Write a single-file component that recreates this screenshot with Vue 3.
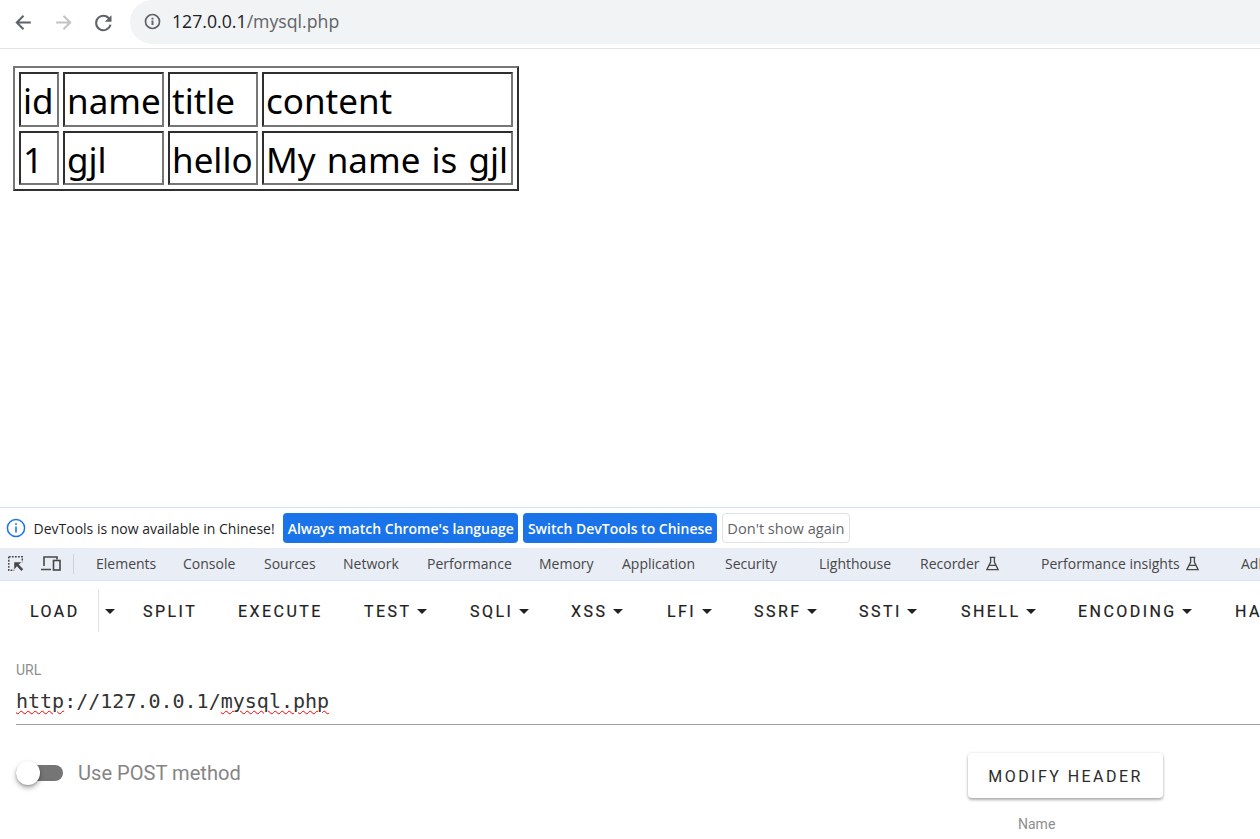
<script setup>
const tabs = [
  { label: 'Elements', w: 87 }, { label: 'Console', w: 81 }, { label: 'Sources', w: 79 }, { label: 'Network', w: 84 },
  { label: 'Performance', w: 112 }, { label: 'Memory', w: 83 }, { label: 'Application', w: 103 }, { label: 'Security', w: 94 },
  { label: 'Lighthouse', w: 101 }, { label: 'Recorder', w: 121, flask: true }, { label: 'Performance insights', w: 200, flask: true }, { label: 'Adblock', w: 80 }
]
const tools = [
  { label: 'SPLIT', w: 95 }, { label: 'EXECUTE', w: 126 }, { label: 'TEST', caret: true, w: 106 }, { label: 'SQLI', caret: true, w: 101 },
  { label: 'XSS', caret: true, w: 96 }, { label: 'LFI', caret: true, w: 87 }, { label: 'SSRF', caret: true, w: 105 },
  { label: 'SSTI', caret: true, w: 102 }, { label: 'SHELL', caret: true, w: 117 }, { label: 'ENCODING', caret: true, w: 157 }, { label: 'HASHING', caret: true, w: 120 }
]
</script>

<template>
  <div class="screen">
    <header class="browser">
      <div class="nav">
        <svg class="nav-icon" viewBox="0 0 20 20"><path d="M17 10H4M10 3.6 3.6 10l6.4 6.4" fill="none" stroke="#5f6368" stroke-width="1.9"/></svg>
        <svg class="nav-icon" viewBox="0 0 20 20"><path d="M3 10h13M10 3.6l6.4 6.4-6.4 6.4" fill="none" stroke="#c1c3c6" stroke-width="1.9"/></svg>
        <svg class="nav-icon" viewBox="0 0 20 20"><path d="M16.4 8.2A6.9 6.9 0 1 0 16.6 12" fill="none" stroke="#5f6368" stroke-width="1.9"/><path d="M17.6 3v6.4h-6.4z" fill="#5f6368"/></svg>
      </div>
      <div class="omnibox">
        <svg class="info" viewBox="0 0 16 16"><circle cx="8" cy="8" r="6.6" fill="none" stroke="#5f6368" stroke-width="1.6"/><path d="M7.1 7.1h1.8v4.2H7.1zM7.1 4.5h1.8v1.7H7.1z" fill="#5f6368"/></svg>
        <span class="host">127.0.0.1</span><span class="path">/mysql.php</span>
      </div>
    </header>

    <main class="page">
      <table class="data">
        <colgroup><col class="c1"><col class="c2"><col class="c3"><col class="c4"></colgroup>
        <tbody>
          <tr class="r1"><td>id</td><td>name</td><td>title</td><td>content</td></tr>
          <tr class="r2"><td>1</td><td>gjl</td><td>hello</td><td>My name is gjl</td></tr>
        </tbody>
      </table>
    </main>

    <section class="devtools">
      <div class="notice">
        <svg class="notice-icon" viewBox="0 0 20 20"><circle cx="10" cy="10" r="8.6" fill="none" stroke="#1a73e8" stroke-width="1.5"/><path d="M9.2 8.6h1.6v6H9.2zM9.2 5.2h1.6v1.7H9.2z" fill="#1a73e8"/></svg>
        <span class="notice-text">DevTools is now available in Chinese!</span>
        <span class="btn primary">Always match Chrome's language</span>
        <span class="btn primary">Switch DevTools to Chinese</span>
        <span class="btn plain">Don't show again</span>
      </div>

      <div class="tabbar">
        <svg class="tool-icon first" viewBox="0 0 20 20"><path d="M2 2h15v6M2 2v15h6" fill="none" stroke="#474747" stroke-width="1.6" stroke-dasharray="2 1.4"/><path d="M8 8h8l-3 2.6 5 5.2-2 2-5-5.2L8 16z" fill="#474747"/></svg>
        <svg class="tool-icon second" viewBox="0 0 22 20"><path d="M4 12V3h13v2.5M1 15.500h10" fill="none" stroke="#474747" stroke-width="1.6"/><rect x="13.500" y="6.500" width="6.500" height="9.500" fill="none" stroke="#474747" stroke-width="1.6"/></svg>
        <span class="tab-sep"></span>
        <span v-for="t in tabs" :key="t.label" class="tab" :style="{ width: t.w + 'px' }">
          {{ t.label }}
          <svg v-if="t.flask" class="flask" viewBox="0 0 16 16"><path d="M5 1.500h6M6 1.500v5L2 14.500h12L10 6.500v-5M4.600 10h6.800" fill="none" stroke="#474747" stroke-width="1.4"/></svg>
        </span>
      </div>

      <nav class="hackbar">
        <span class="load">LOAD</span>
        <span class="load-split"><i class="caret"></i></span>
        <span v-for="t in tools" :key="t.label" class="tool" :style="{ width: t.w + 'px' }">
          {{ t.label }}<i v-if="t.caret" class="caret after"></i>
        </span>
      </nav>

      <div class="url-field">
        <div class="url-label">URL</div>
        <div class="url-value"><span class="wavy">http</span>://127.0.0.1/<span class="wavy">mysql.php</span></div>
      </div>

      <div class="options">
        <div class="post">
          <span class="switch"><span class="knob"></span></span>
          <span class="post-label">Use POST method</span>
        </div>
        <div class="header-col">
          <span class="modify">MODIFY HEADER</span>
          <span class="name-label">Name</span>
        </div>
      </div>
    </section>
  </div>
</template>

<style scoped>
.screen {
  width: 1260px;
  height: 839px;
  overflow: hidden;
  display: flex;
  flex-direction: column;
  background: #fff;
  font-family: "Open Sans", "Noto Sans", sans-serif;
}
.browser {
  height: 48px;
  flex: none;
  display: flex;
  align-items: center;
  border-bottom: 1px solid #e2e3e5;
  box-sizing: content-box;
}
.nav {
  display: flex;
  gap: 19px;
  padding-left: 13px;
  width: 117px;
  box-sizing: border-box;
}
.nav-icon {
  width: 21px;
  height: 21px;
  margin-top: -4px;
}
.omnibox {
  flex: 1;
  height: 44px;
  margin-top: -4px;
  margin-left: 13px;
  background: #f1f3f4;
  border-radius: 22px 0 0 22px;
  display: flex;
  align-items: center;
  padding: 0 0 2px 14px;
  box-sizing: border-box;
  font-size: 17.7px;
}
.info {
  width: 17px;
  height: 17px;
  margin-right: 11px;
}
.host { color: #202124; }
.path { color: #5f6368; }

.page {
  height: 458px;
  flex: none;
  padding: 17px 0 0 13px;
  box-sizing: border-box;
}
.data {
  border: 2px solid;
  border-color: #767676 #2f2f2f #2f2f2f #767676;
  border-spacing: 4px;
  border-collapse: separate;
  table-layout: fixed;
  width: 506px;
  font-family: "Noto Sans", "Open Sans", sans-serif;
  font-size: 35px;
  word-spacing: 2px;
  color: #000;
}
.c1 { width: 40px; }
.c2 { width: 101px; }
.c3 { width: 90px; }
.c4 { width: 251px; }
.data td {
  border: 2px solid;
  border-color: #2f2f2f #767676 #767676 #2f2f2f;
  padding: 2px 2px 0;
  box-sizing: border-box;
  white-space: nowrap;
  overflow: hidden;
  line-height: 47px;
}
.r1 td { height: 55px; }
.r2 td { height: 54px; }

.devtools {
  flex: 1;
  border-top: 1px solid #d2e0fb;
}
.notice {
  height: 40px;
  display: flex;
  align-items: center;
  padding-left: 5.500px;
  font-size: 14px;
  color: #1f1f1f;
}
.notice-icon {
  width: 20px;
  height: 20px;
  margin-right: 8px;
}
.notice-text { margin-right: 8.500px; }
.btn {
  height: 30px;
  box-sizing: border-box;
  display: flex;
  align-items: center;
  padding: 0 4.500px;
  border-radius: 4px;
  margin-right: 5px;
  font-size: 14px;
}
.primary {
  background: #1a73e8;
  color: #fff;
  font-weight: 600;
}
.plain {
  border: 1px solid #dfe1e5;
  color: #5f6368;
  font-weight: 500;
  font-size: 14.600px;
}
.tabbar {
  height: 33px;
  box-sizing: border-box;
  background: #e9edf6;
  border-bottom: 1px solid #d3e3fd;
  display: flex;
  align-items: center;
  font-size: 14px;
  color: #474747;
  white-space: nowrap;
}
.tool-icon { flex: none; }
.first {
  width: 18px;
  height: 18px;
  margin-left: 7px;
}
.second {
  width: 22px;
  height: 20px;
  margin-left: 15px;
}
.tab-sep {
  width: 1px;
  height: 20px;
  background: #ccd3e0;
  margin: 0 22px 0 11px;
  flex: none;
}
.tab {
  flex: none;
  display: flex;
  align-items: center;
  gap: 5px;
  padding-bottom: 2px;
  box-sizing: border-box;
}
.flask {
  width: 15px;
  height: 15px;
}

.hackbar {
  height: 48px;
  margin-top: 6px;
  display: flex;
  align-items: center;
  font-family: Roboto, sans-serif;
  font-weight: 400;
  font-size: 16px;
  letter-spacing: 2.450px;
  color: #212121;
  white-space: nowrap;
  -webkit-text-stroke: 0.2px #212121;
}
.load {
  flex: none;
  width: 68px;
  padding-left: 30px;
  box-sizing: content-box;
}
.load-split {
  flex: none;
  width: 45px;
  height: 42px;
  display: flex;
  align-items: center;
  border-left: 1px solid #e0e0e0;
  padding-left: 6px;
  box-sizing: border-box;
}
.tool {
  flex: none;
  display: flex;
  align-items: center;
}
.caret {
  width: 0;
  height: 0;
  display: inline-block;
  border-left: 5px solid transparent;
  border-right: 5px solid transparent;
  border-top: 5px solid #212121;
}
.after { margin-left: 5.500px; }

.url-field {
  padding: 26px 0 0 16px;
  font-family: Roboto, sans-serif;
}
.url-label {
  font-size: 14px;
  line-height: 18px;
  color: #8e8e8e;
}
.url-value {
  margin-top: 8px;
  height: 38px;
  line-height: 28px;
  box-sizing: border-box;
  border-bottom: 1px solid #9e9e9e;
  font-family: "DejaVu Sans Mono", "Liberation Mono", monospace;
  font-size: 20px;
  color: #333;
}
.wavy {
  text-decoration: underline wavy #ff0000 1.300px;
  text-underline-offset: 2px;
}

.options {
  display: flex;
  justify-content: space-between;
  padding-left: 16px;
}
.post {
  display: flex;
  align-items: center;
  height: 28px;
  margin-top: 34px;
}
.switch {
  position: relative;
  width: 47px;
  height: 16px;
  border-radius: 8px;
  background: #757575;
  margin-right: 15px;
}
.knob {
  position: absolute;
  left: 0;
  top: -4px;
  width: 24px;
  height: 24px;
  border-radius: 50%;
  background: #fff;
  box-shadow: 0 3px 5px rgba(0, 0, 0, .3), 0 1px 2px rgba(0, 0, 0, .2);
}
.post-label {
  font-family: Roboto, sans-serif;
  font-size: 20.100px;
  color: #858585;
}
.header-col {
  width: 292px;
  padding-top: 28px;
  flex: none;
  display: flex;
  flex-direction: column;
  font-family: Roboto, sans-serif;
}
.modify {
  width: 195px;
  height: 45px;
  padding-top: 1px;
  box-sizing: border-box;
  display: flex;
  align-items: center;
  justify-content: center;
  border-radius: 4px;
  background: #fff;
  box-shadow: 0 2px 3px rgba(0, 0, 0, .3), 0 0 3px rgba(0, 0, 0, .1);
  font-size: 16px;
  font-weight: 400;
  letter-spacing: 2.450px;
  color: #2b2b2b;
  white-space: nowrap;
}
.name-label {
  margin: 18px 0 0 50px;
  font-size: 14px;
  color: #8e8e8e;
}
</style>
